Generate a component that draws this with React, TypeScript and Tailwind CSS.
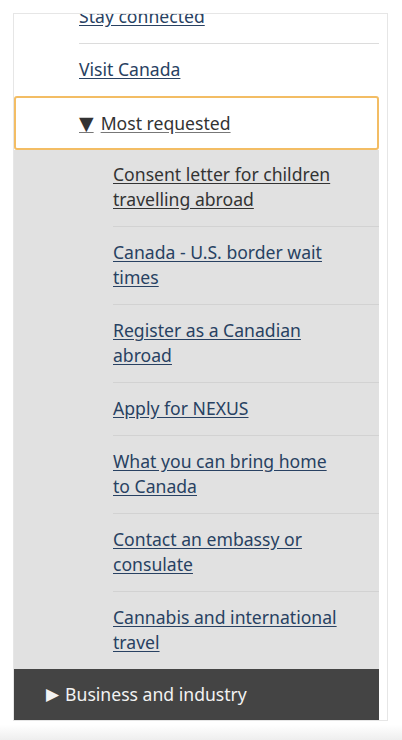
/**
 * Mobile menu panel: "Most requested" expanded
 */

interface MenuLink {
  label: string;
  visited?: boolean;
}

const MOST_REQUESTED: MenuLink[] = [
  { label: 'Consent letter for children travelling abroad', visited: true },
  { label: 'Canada - U.S. border wait times' },
  { label: 'Register as a Canadian abroad' },
  { label: 'Apply for NEXUS' },
  { label: 'What you can bring home to Canada' },
  { label: 'Contact an embassy or consulate' },
  { label: 'Cannabis and international travel' },
];

const FONT = "font-['Noto_Sans','Open_Sans',sans-serif]";

export default function App() {
  return (
    <div className={`min-h-[740px] bg-white pt-[13px] ${FONT} text-[17.6px] leading-[25px]`}>
      {/* Scrolled menu panel */}
      <div className="ml-[13px] w-[375px] h-[708px] border border-[#e6e6e6] overflow-hidden">
        <div className="-mt-[24px] pr-[8px]">
          {/* Top-level links */}
          <ul className="pl-[65px]">
            <li className="pt-[14px] pb-[14px] border-b border-[#dcdcdc]">
              <a href="#" className="text-[#284162] underline underline-offset-[2px]">
                Stay connected
              </a>
            </li>
            <li className="pt-[13px] pb-[14px]">
              <a href="#" className="text-[#284162] underline underline-offset-[2px]">
                Visit Canada
              </a>
            </li>
          </ul>

          {/* Expanded section, summary focused */}
          <div className="h-[54px] border-2 border-[#f3bd64] rounded-[3px] pl-[63px] flex items-center">
            <span className="text-[#333333] underline underline-offset-[2px] decoration-[#777777]">
              <span className="font-['DejaVu_Sans',sans-serif] text-[19px] leading-[25px] mr-[7px]">▼</span>
              Most requested
            </span>
          </div>

          <ul className="bg-[#e1e1e1] pl-[99px]">
            {MOST_REQUESTED.map((item, index) => (
              <li
                key={item.label}
                className={`
                  pb-[14px]
                  ${index === 0 ? 'pt-[12px]' : 'pt-[13px]'}
                  ${index < MOST_REQUESTED.length - 1 ? 'border-b border-[#d2d2d2]' : ''}
                `}
              >
                <a
                  href="#"
                  className={`block pr-[36px] underline underline-offset-[2px] ${
                    item.visited ? 'text-[#333333]' : 'text-[#284162]'
                  }`}
                >
                  {item.label}
                </a>
              </li>
            ))}
          </ul>

          {/* Collapsed section */}
          <div className="bg-[#444444] h-[51px] pl-[32px] flex items-center text-[#f2f2f2]">
            <span className="font-['DejaVu_Sans',sans-serif] text-[17px] leading-[25px] mr-[6px]">▶</span>
            Business and industry
          </div>
        </div>
      </div>
      <div className="h-[19px] bg-gradient-to-b from-white from-20% to-[#eeeeee]" />
    </div>
  );
}
